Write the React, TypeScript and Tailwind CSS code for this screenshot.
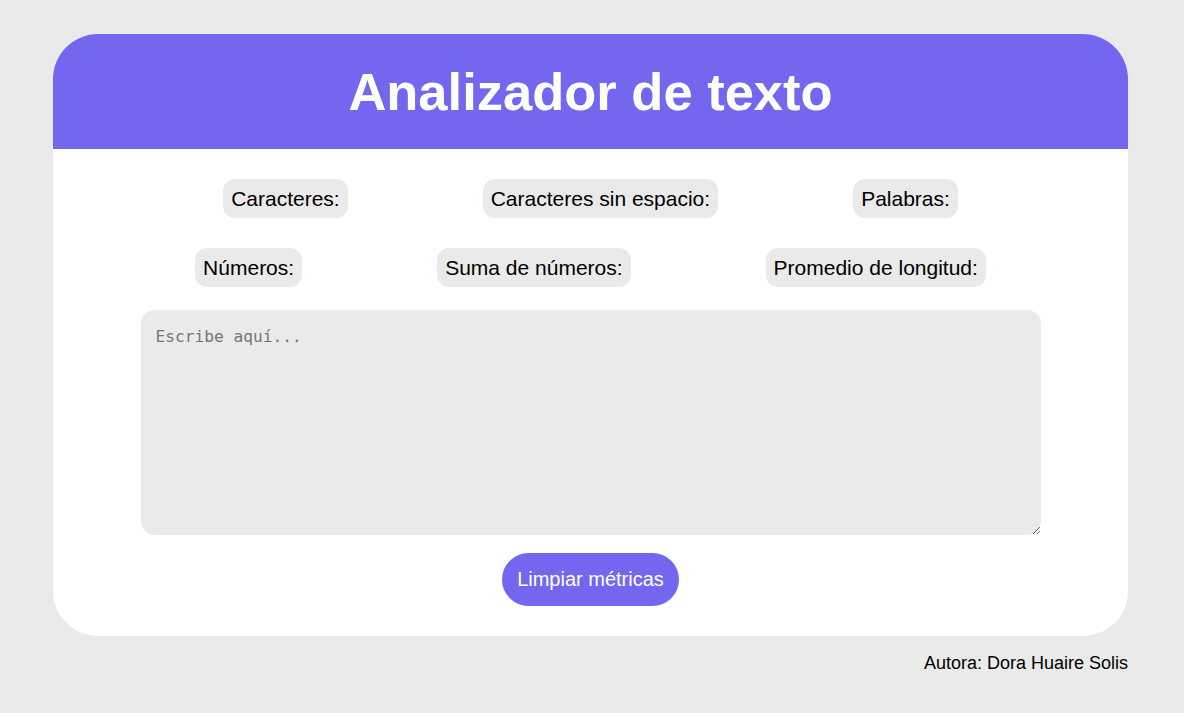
import React from "react";

const row1 = ["Caracteres:", "Caracteres sin espacio:", "Palabras:"];
const row2 = ["Números:", "Suma de números:", "Promedio de longitud:"];

function Pill({ label }: { label: string }) {
  return (
    <div className="rounded-[12px] bg-[#eaeaea] px-2 py-2 text-[21px] leading-[23px] text-black">
      {label}
    </div>
  );
}

export default function App() {
  return (
    <div
      className="min-h-[713px] w-full bg-[#eaeaea] pt-[34px]"
      style={{ fontFamily: '"Liberation Sans", Arial, sans-serif' }}
    >
      <div className="ml-[53px] w-[1075px] overflow-hidden rounded-[45px] bg-white">
        <header className="flex h-[115px] items-center justify-center bg-[#7367f0]">
          <h1 className="text-[52.5px] font-bold leading-[60px] text-white">Analizador de texto</h1>
        </header>
        <div className="flex flex-col items-center pt-[30px] pb-[30px]">
          <div className="flex justify-center gap-[135px]">
            {row1.map((l) => (
              <Pill key={l} label={l} />
            ))}
          </div>
          <div className="mt-[30px] flex justify-center gap-[135px]">
            {row2.map((l) => (
              <Pill key={l} label={l} />
            ))}
          </div>
          <textarea
            placeholder="Escribe aquí..."
            className="mt-[23px] h-[225px] w-[900px] rounded-[14px] bg-[#eaeaea] px-[15px] pt-[17px] text-[16.2px] leading-[20px] text-black outline-none placeholder:text-[#757575]"
            style={{ fontFamily: '"DejaVu Sans Mono", "Liberation Mono", monospace' }}
          />
          <button className="mt-[18px] h-[53px] w-[177px] rounded-full bg-[#7367f0] text-[20px] leading-[23px] text-white">
            Limpiar métricas
          </button>
        </div>
      </div>
      <div className="ml-[53px] mt-[17px] w-[1075px] text-right text-[18px] leading-[21px] text-black">
        Autora: Dora Huaire Solis
      </div>
    </div>
  );
}
